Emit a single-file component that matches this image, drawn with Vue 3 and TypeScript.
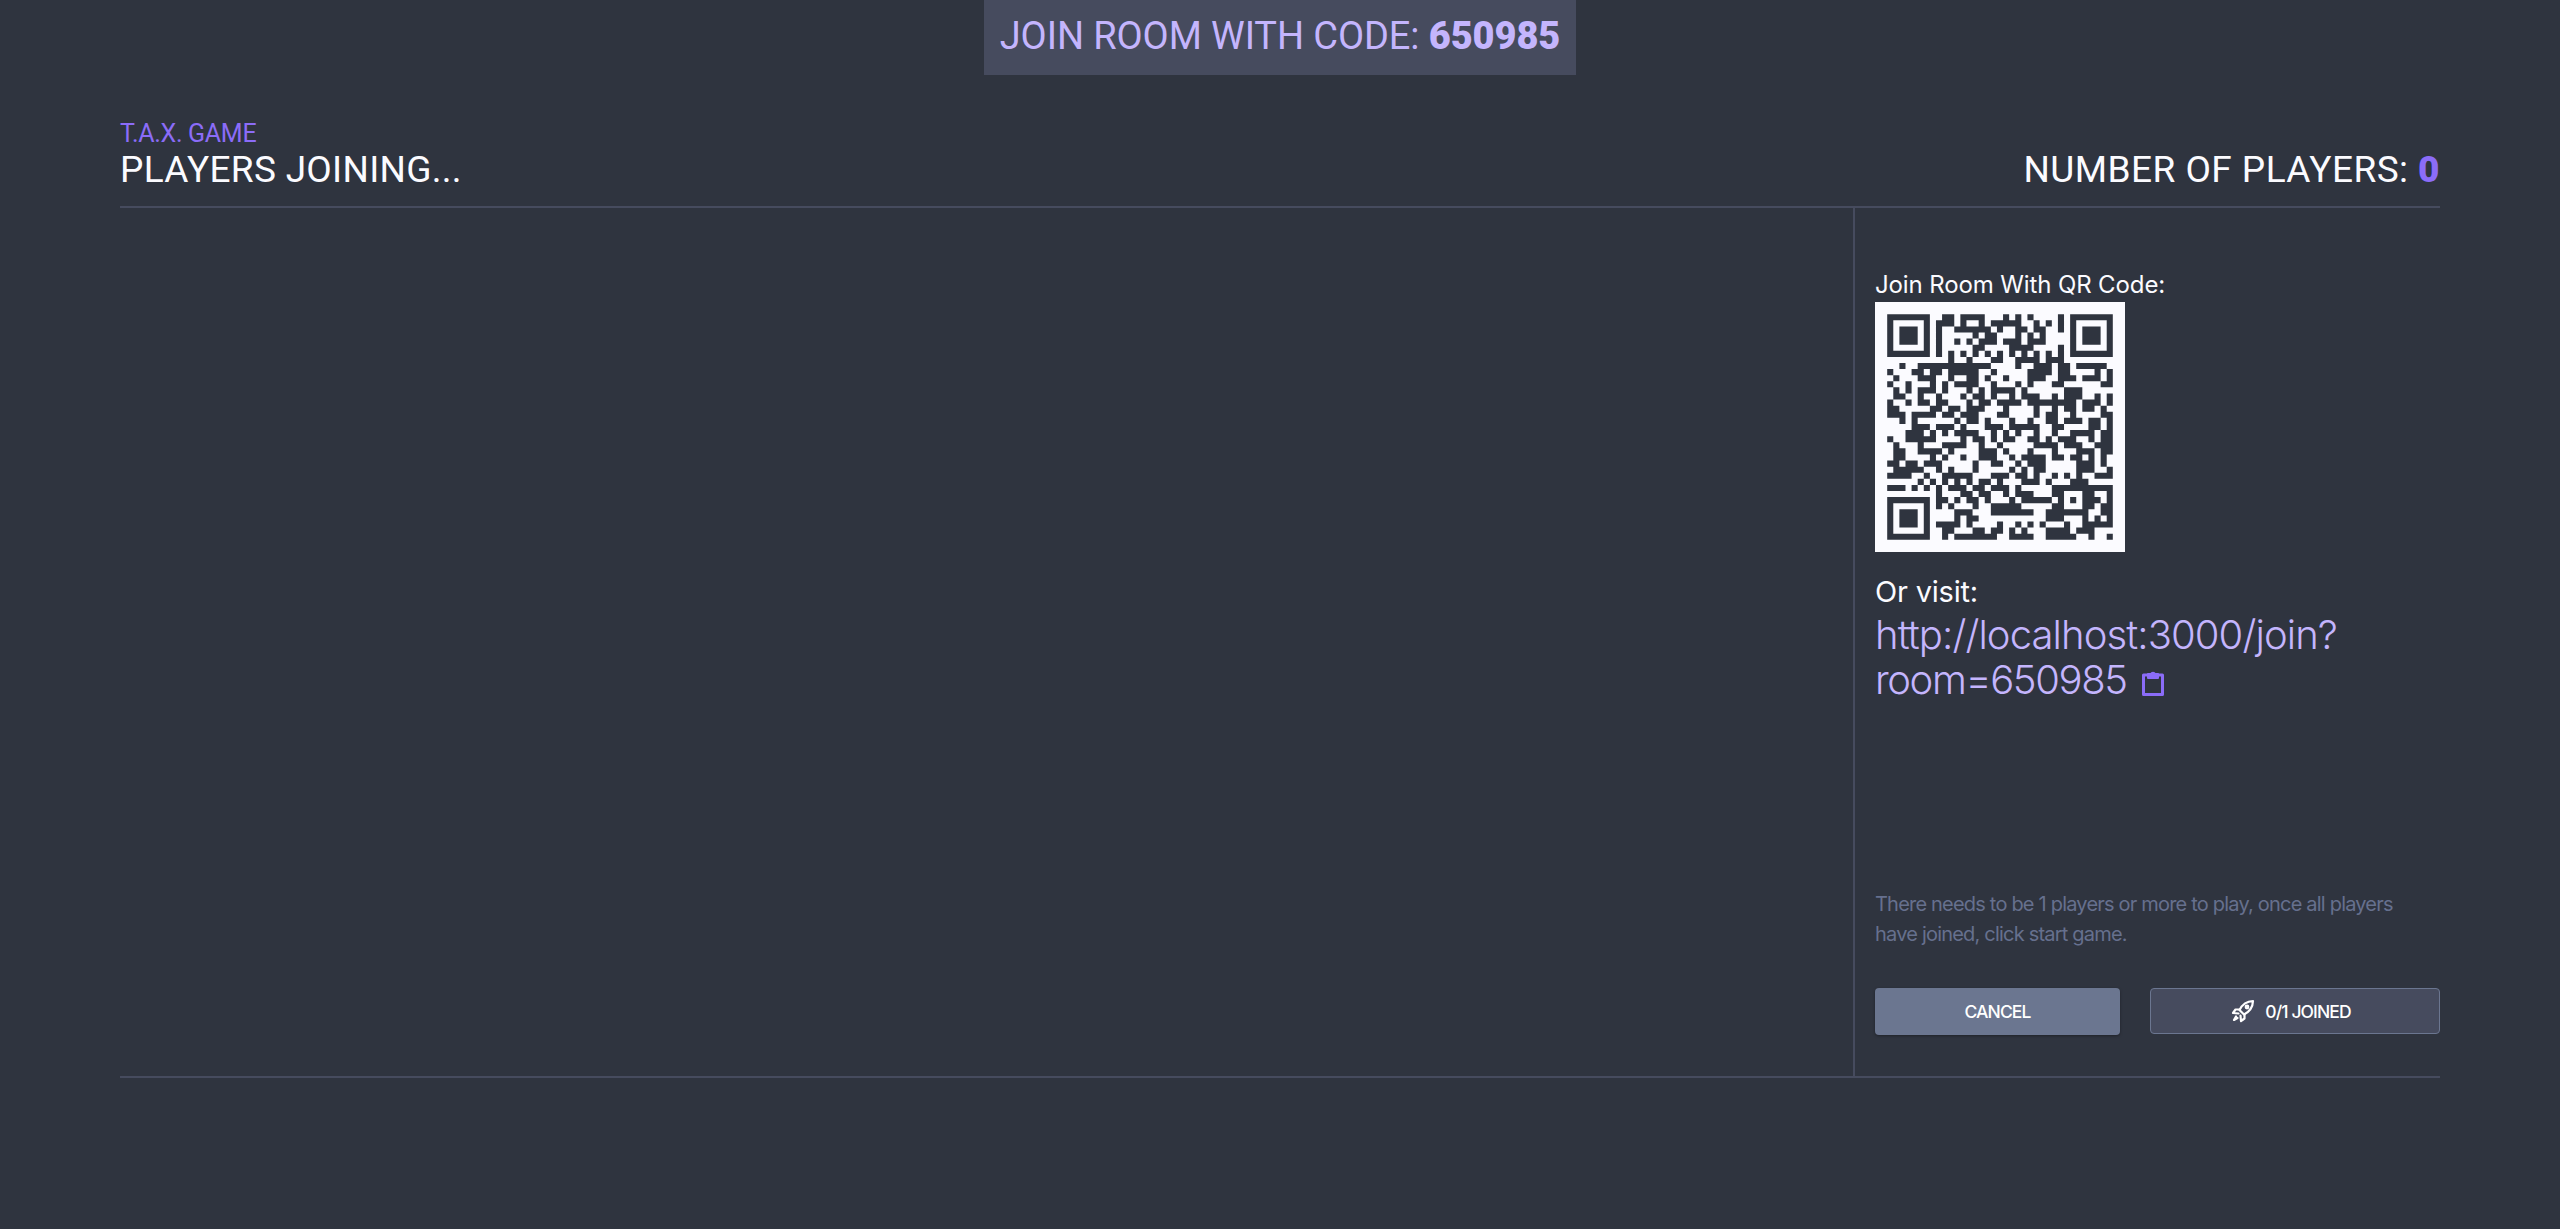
<script setup lang="ts">
const SIZE = 37
const QR_TEXT = 'http://localhost:3000/join?r=650985'
const GF_EXP: number[] = new Array(512).fill(0)
const GF_LOG: number[] = new Array(256).fill(0)
{
  let x = 1
  for (let i = 0; i < 255; i++) {
    GF_EXP[i] = x
    GF_LOG[x] = i
    x <<= 1
    if (x & 256) x ^= 0x11d
  }
  for (let i = 255; i < 512; i++) GF_EXP[i] = GF_EXP[i - 255]
}
const gfMul = (a: number, b: number) => (a && b ? GF_EXP[GF_LOG[a] + GF_LOG[b]] : 0)
function rsEncode(data: number[], ecLen: number): number[] {
  let gen = [1]
  for (let i = 0; i < ecLen; i++) {
    const next = new Array(gen.length + 1).fill(0)
    gen.forEach((c, j) => {
      next[j] ^= c
      next[j + 1] ^= gfMul(c, GF_EXP[i])
    })
    gen = next
  }
  const res = new Array(ecLen).fill(0)
  for (const d of data) {
    const f = d ^ res[0]
    res.shift()
    res.push(0)
    for (let i = 0; i < ecLen; i++) res[i] ^= gfMul(gen[i + 1], f)
  }
  return res
}
function buildCodewords(text: string): number[] {
  // Version 5-H: 46 data codewords in 4 blocks (11,11,12,12), 22 EC per block.
  const bits: number[] = []
  const push = (v: number, n: number) => {
    for (let i = n - 1; i >= 0; i--) bits.push((v >> i) & 1)
  }
  push(4, 4)
  push(text.length, 8)
  for (let i = 0; i < text.length; i++) push(text.charCodeAt(i), 8)
  const cap = 46
  push(0, Math.min(4, cap * 8 - bits.length))
  while (bits.length % 8) bits.push(0)
  const data: number[] = []
  for (let i = 0; i < bits.length; i += 8) data.push(parseInt(bits.slice(i, i + 8).join(''), 2))
  for (let p = 0xec; data.length < cap; p = p === 0xec ? 0x11 : 0xec) data.push(p)
  const sizes = [11, 11, 12, 12]
  const blocks: number[][] = []
  let off = 0
  for (const s of sizes) {
    blocks.push(data.slice(off, off + s))
    off += s
  }
  const ecs = blocks.map(b => rsEncode(b, 22))
  const out: number[] = []
  for (let i = 0; i < 12; i++) for (const b of blocks) if (i < b.length) out.push(b[i])
  for (let i = 0; i < 22; i++) for (const e of ecs) out.push(e[i])
  return out
}
function build(text: string, mask: number): boolean[][] {
  const m: boolean[][] = Array.from({ length: SIZE }, () => new Array(SIZE).fill(false))
  const fn: boolean[][] = Array.from({ length: SIZE }, () => new Array(SIZE).fill(false))
  const set = (r: number, c: number, v: boolean) => {
    if (r < 0 || c < 0 || r >= SIZE || c >= SIZE) return
    m[r][c] = v
    fn[r][c] = true
  }
  const finder = (r0: number, c0: number) => {
    for (let r = -1; r <= 7; r++)
      for (let c = -1; c <= 7; c++) {
        const inside = r >= 0 && r <= 6 && c >= 0 && c <= 6
        const on = inside && (r === 0 || r === 6 || c === 0 || c === 6 || (r >= 2 && r <= 4 && c >= 2 && c <= 4))
        set(r0 + r, c0 + c, on)
      }
  }
  finder(0, 0)
  finder(0, SIZE - 7)
  finder(SIZE - 7, 0)
  for (let i = 8; i < SIZE - 8; i++) {
    set(6, i, i % 2 === 0)
    set(i, 6, i % 2 === 0)
  }
  for (let r = -2; r <= 2; r++)
    for (let c = -2; c <= 2; c++) set(30 + r, 30 + c, Math.max(Math.abs(r), Math.abs(c)) !== 1)
  const fmtData = (2 << 3) | mask
  let rem = fmtData
  for (let i = 0; i < 10; i++) rem = (rem << 1) ^ ((rem >> 9) * 0x537)
  const fmt = ((fmtData << 10) | rem) ^ 0x5412
  const b = (i: number) => ((fmt >> i) & 1) === 1
  for (let i = 0; i <= 5; i++) set(i, 8, b(i))
  set(7, 8, b(6))
  set(8, 8, b(7))
  set(8, 7, b(8))
  for (let i = 9; i < 15; i++) set(8, 14 - i, b(i))
  for (let i = 0; i < 8; i++) set(8, SIZE - 1 - i, b(i))
  for (let i = 8; i < 15; i++) set(SIZE - 15 + i, 8, b(i))
  set(SIZE - 8, 8, true)
  const words = buildCodewords(text)
  let idx = 0
  for (let right = SIZE - 1; right >= 1; right -= 2) {
    if (right === 6) right = 5
    for (let v = 0; v < SIZE; v++) {
      for (let j = 0; j < 2; j++) {
        const c = right - j
        const up = ((right + 1) & 2) === 0
        const r = up ? SIZE - 1 - v : v
        if (!fn[r][c]) {
          const bit = idx < words.length * 8 ? ((words[idx >> 3] >> (7 - (idx & 7))) & 1) === 1 : false
          idx++
          m[r][c] = r % 2 === 0 ? !bit : bit
        }
      }
    }
  }
  return m
}
function qrPath(text: string): string {
  let d = ''
  build(text, 1).forEach((row, r) => {
    let c = 0
    while (c < SIZE) {
      if (row[c]) {
        const start = c
        while (c < SIZE && row[c]) c++
        d += `M${start + 2} ${r + 2}h${c - start}v1h-${c - start}z`
      } else c++
    }
  })
  return d
}
const mainPath = qrPath(QR_TEXT)
</script>

<template>
  <div class="page">
    <div class="banner-wrap">
      <div class="banner">JOIN ROOM WITH CODE: <strong>650985</strong></div>
    </div>
    <main class="panel">
      <header class="head">
        <div>
          <div class="eyebrow">T.A.X. GAME</div>
          <h1 class="title">PLAYERS JOINING...</h1>
        </div>
        <div class="count">NUMBER OF PLAYERS: <strong>0</strong></div>
      </header>
      <div class="body">
        <section class="players"></section>
        <aside class="side">
          <div class="qr-label">Join Room With QR Code:</div>
          <svg class="qr" viewBox="0 0 41 41" role="img" aria-label="QR code">
            <rect width="41" height="41" fill="#fbfbff" />
            <path :d="mainPath" fill="#2f343f" />
          </svg>
          <div class="visit">Or visit:</div>
          <div class="link">
            http://localhost:3000/join?<br /><span class="room">room=650985</span>
            <svg class="clip" viewBox="0 0 24 28" fill="none" stroke="#8b6cf8" stroke-width="3" stroke-linejoin="round">
              <path d="M7 6H2.500v19.500h19V6H17" />
              <path d="M7 9V5h3a2.200 2.200 0 0 1 4 0h3v4z" fill="#8b6cf8" stroke-width="2" />
            </svg>
          </div>
          <p class="note">There needs to be 1 players or more to play, once all players have joined, click start game.</p>
          <div class="actions">
            <button class="btn cancel">CANCEL</button>
            <button class="btn joined">
              <svg class="rocket" viewBox="0 0 24 24" fill="none" stroke="#fff" stroke-width="2.200" stroke-linejoin="round" stroke-linecap="round">
                <path d="M8.500 11C11.500 5 16 2.200 22 2 21.800 8 19 12.500 13 15.500L8.500 11z" />
                <path d="M8.500 10.500H4.500L2 14 7.500 14.500" />
                <path d="M13.500 15.500V19.500L10 22 9.500 16.500" />
                <circle cx="16" cy="8" r="1.300" />
                <path d="M5 17.500 3 21 6.500 19" />
              </svg>
              <span>0/1 JOINED</span>
            </button>
          </div>
        </aside>
      </div>
    </main>
  </div>
</template>

<style>
html, body { margin: 0; background: #2f343f; }
</style>

<style scoped>
.page {
  height: 1229px;
  background: #2f343f;
  color: #fbfbff;
  font-family: Inter, "Liberation Sans", sans-serif;
  overflow: hidden;
}
.banner-wrap { display: flex; justify-content: center; }
.banner {
  box-sizing: border-box;
  width: 592px;
  height: 75px;
  background: #464b5e;
  color: #c4b5fd;
  font-family: Roboto, sans-serif;
  font-size: 38px;
  font-weight: 400;
  letter-spacing: -0.1px;
  line-height: 72px;
  text-align: center;
  white-space: nowrap;
}
.banner strong { font-weight: 900; }
.panel { margin: 45px 120px 0; }
.head {
  display: flex;
  justify-content: space-between;
  align-items: flex-end;
  height: 86px;
  border-bottom: 2px solid #464b5e;
}
.eyebrow { font-size: 25px; line-height: 28px; color: #8b6cf8; font-family: Roboto, sans-serif; letter-spacing: -0.3px; }
.title { margin: 0 0 14px; font-family: Roboto, sans-serif; font-size: 37px; line-height: 44px; font-weight: 400; letter-spacing: 0.3px; }
.count { font-family: Roboto, sans-serif; font-size: 37px; line-height: 44px; margin-bottom: 14px; font-weight: 400; letter-spacing: 0.45px; }
.count strong { color: #8b6cf8; font-weight: 900; }
.body {
  display: flex;
  height: 868px;
  border-bottom: 2px solid #464b5e;
}
.players { width: 1733px; border-right: 2px solid #464b5e; }
.side { flex: 1; padding-left: 20px; display: flex; flex-direction: column; }
.qr-label { margin-top: 62px; font-size: 24px; line-height: 29px; letter-spacing: -0.12px; }
.qr { width: 250px; height: 250px; display: block; margin-top: 3px; }
.visit { margin-top: 20px; font-size: 29px; line-height: 40px; letter-spacing: -0.2px; }
.link { font-size: 40px; line-height: 45px; color: #c4b5fd; font-weight: 300; letter-spacing: -0.9px; }
.room { letter-spacing: -1.4px; }
.clip { width: 26px; height: 28px; vertical-align: -3px; margin-left: 13px; }
.note { margin: 187px 0 0; max-width: 540px; font-size: 20px; line-height: 30px; color: #66708e; letter-spacing: -0.8px; }
.actions { display: flex; justify-content: space-between; margin-top: 39px; }
.btn {
  box-sizing: border-box;
  height: 47px;
  border-radius: 4px;
  color: #fff;
  font-family: Inter, sans-serif;
  font-size: 17.5px;
  font-weight: 500;
  display: flex;
  align-items: center;
  justify-content: center;
  letter-spacing: -0.9px;
}
.cancel { width: 245px; border: 0; background: #6b7690; box-shadow: 0 1px 3px rgba(0,0,0,.35); }
.joined { width: 290px; height: 46px; background: #464b5e; border: 1.5px solid #6b7690; gap: 10px; padding-right: 14px; }
.rocket { width: 24px; height: 24px; }
</style>
